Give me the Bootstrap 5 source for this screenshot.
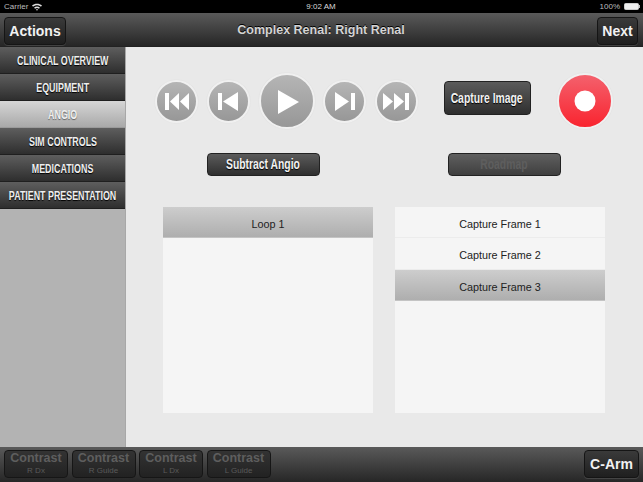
<!DOCTYPE html>
<html lang="en">
<head>
<meta charset="utf-8">
<title>Complex Renal: Right Renal</title>
<link href="https://cdn.jsdelivr.net/npm/bootstrap@5.3.0/dist/css/bootstrap.min.css" rel="stylesheet">
<style>
html,body{height:482px;overflow:hidden;background:#e9e9e9;font-family:"Liberation Sans",Arial,sans-serif;}
.app-shell{width:643px;height:482px;}
.status-strip{height:13px;background:#000;color:#bdbdbd;font-size:8px;line-height:13px;padding:0 3px 0 4px;}
.status-strip .clock{color:#d8d8d8;font-size:8px;}
.top-strip{height:34px;background:linear-gradient(#5a5a5a,#262626);border-bottom:1px solid #222;padding:4px 5px 0 4px;}
.head-side{flex:1 1 0;}
.head-title{color:#d4d4d4;font-weight:700;font-size:12.5px;line-height:26px;text-shadow:0 -1px 0 #000;}
.dark-key{background:linear-gradient(#3a3a3a,#1f1f1f);border:1px solid #151515;border-radius:4px;color:#f2f2f2;font-weight:700;font-size:14px;height:28px;line-height:27px;padding:0;text-align:center;box-shadow:0 1px 0 rgba(255,255,255,.12);}
.key-actions{width:62px;}
.key-next{width:41px;}
.squeeze{display:inline-block;white-space:nowrap;transform:scaleX(.74);flex-shrink:0;}
.body-zone{height:400px;}
.side-rail{width:126px;background:#b3b3b3;border-right:1px solid #a8a8a8;}
.rail-item{height:27px;padding-top:1px;color:#efefef;font-weight:700;font-size:12px;background:linear-gradient(#5e5e5e,#2e2e2e);border-bottom:1px solid #1f1f1f;text-shadow:0 1px 1px #000;}
.rail-on{background:linear-gradient(#d6d6d6,#a9a9a9);color:#f0f0f0;border-bottom-color:#9a9a9a;text-shadow:0 1px 1px #666;}
.stage{width:517px;background:#e9e9e9;padding:26px 0 0 29px;}
.transport{height:56px;}
.round-key{width:43px;height:43px;border-radius:50%;background:linear-gradient(#b5b5b5,#979797);border:2px solid #f0f0f0;box-shadow:0 0 1px #ccc;padding:0;margin-right:9px;}
.round-key svg{display:block;width:100%;height:100%;}
.round-big{width:56px;height:56px;margin-right:8px;}
.round-last{margin-right:0;}
.capture-key{width:87px;height:34px;margin:8px 26px 0 26px;background:linear-gradient(#5b5b5b,#2f2f2f);border:1px solid #222;border-radius:4px;color:#f2f2f2;font-weight:700;font-size:14px;text-shadow:0 1px 1px #000;padding:0 1px 0 0;}
.rec-key{width:56px;height:56px;border-radius:50%;background:linear-gradient(#f4616d,#f9242f);border:2px solid #f0f0f0;box-shadow:0 0 1px #ccc;padding:0;}
.rec-key svg{display:block;width:100%;height:100%;}
.action-row{height:23px;margin-top:24px;padding-left:52px;}
.wide-key{width:113px;height:23px;background:linear-gradient(#5b5b5b,#2f2f2f);border:1px solid #222;border-radius:4px;color:#f2f2f2;font-weight:700;font-size:14px;text-shadow:0 1px 1px #000;padding:0 1px 0 0;}
.wide-off{background:linear-gradient(#5f5f5f,#3f3f3f);color:#5e5e5e;margin-left:128px;text-shadow:none;}
.list-row{margin-top:31px;padding-left:8px;gap:22px;}
.pick-list{width:210px;height:206px;background:#f5f5f5;}
.pick-row{height:31.3px;line-height:34px;text-align:center;font-size:10.8px;color:#222;border-bottom:1px solid #ececec;}
.pick-on{background:linear-gradient(#cdcdcd,#aeaeae);border-bottom-color:#c4c4c4;}
.foot-strip{height:35px;background:linear-gradient(#5a5a5a,#262626);padding:3px 4px 0 4px;}
.dose-key{width:64px;height:28px;background:linear-gradient(#333,#222);border:1px solid #161616;border-radius:4px;color:#5e5e5e;text-align:center;margin-right:3.5px;font-weight:700;font-size:12.5px;line-height:13px;padding:1px 0 0;}
.dose-key span{display:block;font-weight:400;font-size:8px;line-height:9px;color:#5a5a5a;margin-top:1px;}
.key-arm{width:55px;line-height:26px;}
</style>
</head>
<body>
<div class="app-shell d-flex flex-column">
  <div class="status-strip d-flex justify-content-between align-items-center">
    <div class="d-flex align-items-center gap-1">Carrier
      <svg width="10" height="8" viewBox="0 0 10 8"><path d="M0 2.6C2.7 0 7.3 0 10 2.6L8.9 3.8C6.7 1.8 3.3 1.8 1.1 3.8ZM2 4.7C3.7 3.1 6.3 3.1 8 4.7L6.9 5.8C5.8 4.8 4.2 4.8 3.1 5.8ZM3.9 6.6C4.5 6 5.5 6 6.1 6.6L5 7.8Z" fill="#ddd"/></svg>
    </div>
    <div class="clock">9:02 AM</div>
    <div class="d-flex align-items-center gap-1">100%
      <svg width="16" height="7" viewBox="0 0 16 7"><rect x=".5" y=".5" width="14" height="6" rx="1" fill="#eee" stroke="#ccc"/><rect x="15" y="2" width="1" height="3" fill="#bbb"/></svg>
    </div>
  </div>
  <div class="top-strip d-flex align-items-start">
    <div class="head-side d-flex"><div class="dark-key key-actions">Actions</div></div>
    <div class="head-title">Complex Renal: Right Renal</div>
    <div class="head-side d-flex justify-content-end"><div class="dark-key key-next">Next</div></div>
  </div>
  <div class="body-zone d-flex">
    <nav class="side-rail flex-shrink-0">
      <div class="rail-item d-flex justify-content-center align-items-center"><span class="squeeze">CLINICAL OVERVIEW</span></div>
      <div class="rail-item d-flex justify-content-center align-items-center"><span class="squeeze">EQUIPMENT</span></div>
      <div class="rail-item rail-on d-flex justify-content-center align-items-center"><span class="squeeze">ANGIO</span></div>
      <div class="rail-item d-flex justify-content-center align-items-center"><span class="squeeze">SIM CONTROLS</span></div>
      <div class="rail-item d-flex justify-content-center align-items-center"><span class="squeeze">MEDICATIONS</span></div>
      <div class="rail-item d-flex justify-content-center align-items-center"><span class="squeeze">PATIENT PRESENTATION</span></div>
    </nav>
    <main class="stage">
      <div class="transport d-flex align-items-start">
        <div class="d-flex align-items-center transport">
          <button class="round-key" aria-label="First"><svg viewBox="0 0 39 39"><rect x="8" y="11" width="4" height="17" fill="#fff"/><path d="M22 11V28L13 19.5ZM32 11V28L23 19.5Z" fill="#fff"/></svg></button>
          <button class="round-key" aria-label="Previous"><svg viewBox="0 0 39 39"><rect x="9" y="11" width="4" height="17" fill="#fff"/><path d="M29 10V29L14 19.5Z" fill="#fff"/></svg></button>
          <button class="round-key round-big" aria-label="Play"><svg viewBox="0 0 52 52"><path d="M17 15V39L38 27Z" fill="#fff"/></svg></button>
          <button class="round-key" aria-label="Next frame"><svg viewBox="0 0 39 39"><path d="M10 10V29L24 19.5Z" fill="#fff"/><rect x="26" y="11" width="4" height="17" fill="#fff"/></svg></button>
          <button class="round-key round-last" aria-label="Last"><svg viewBox="0 0 39 39"><path d="M6 11V28L16 19.5ZM17 11V28L27 19.5Z" fill="#fff"/><rect x="28" y="11" width="4" height="17" fill="#fff"/></svg></button>
        </div>
        <button class="capture-key d-flex justify-content-center align-items-center"><span class="squeeze">Capture Image</span></button>
        <button class="rec-key" aria-label="Record"><svg viewBox="0 0 52 52"><circle cx="26" cy="26" r="10.5" fill="#fff"/></svg></button>
      </div>
      <div class="action-row d-flex">
        <button class="wide-key d-flex justify-content-center align-items-center"><span class="squeeze">Subtract Angio</span></button>
        <button class="wide-key wide-off d-flex justify-content-center align-items-center"><span class="squeeze">Roadmap</span></button>
      </div>
      <div class="list-row d-flex">
        <div class="pick-list"><div class="pick-row pick-on">Loop 1</div></div>
        <div class="pick-list">
          <div class="pick-row">Capture Frame 1</div>
          <div class="pick-row">Capture Frame 2</div>
          <div class="pick-row pick-on">Capture Frame 3</div>
        </div>
      </div>
    </main>
  </div>
  <div class="foot-strip d-flex justify-content-between">
    <div class="d-flex">
      <div class="dose-key">Contrast<span>R Dx</span></div>
      <div class="dose-key">Contrast<span>R Guide</span></div>
      <div class="dose-key">Contrast<span>L Dx</span></div>
      <div class="dose-key">Contrast<span>L Guide</span></div>
    </div>
    <div class="dark-key key-arm">C-Arm</div>
  </div>
</div>
<script src="https://cdn.jsdelivr.net/npm/bootstrap@5.3.0/dist/js/bootstrap.bundle.min.js"></script>
</body>
</html>
